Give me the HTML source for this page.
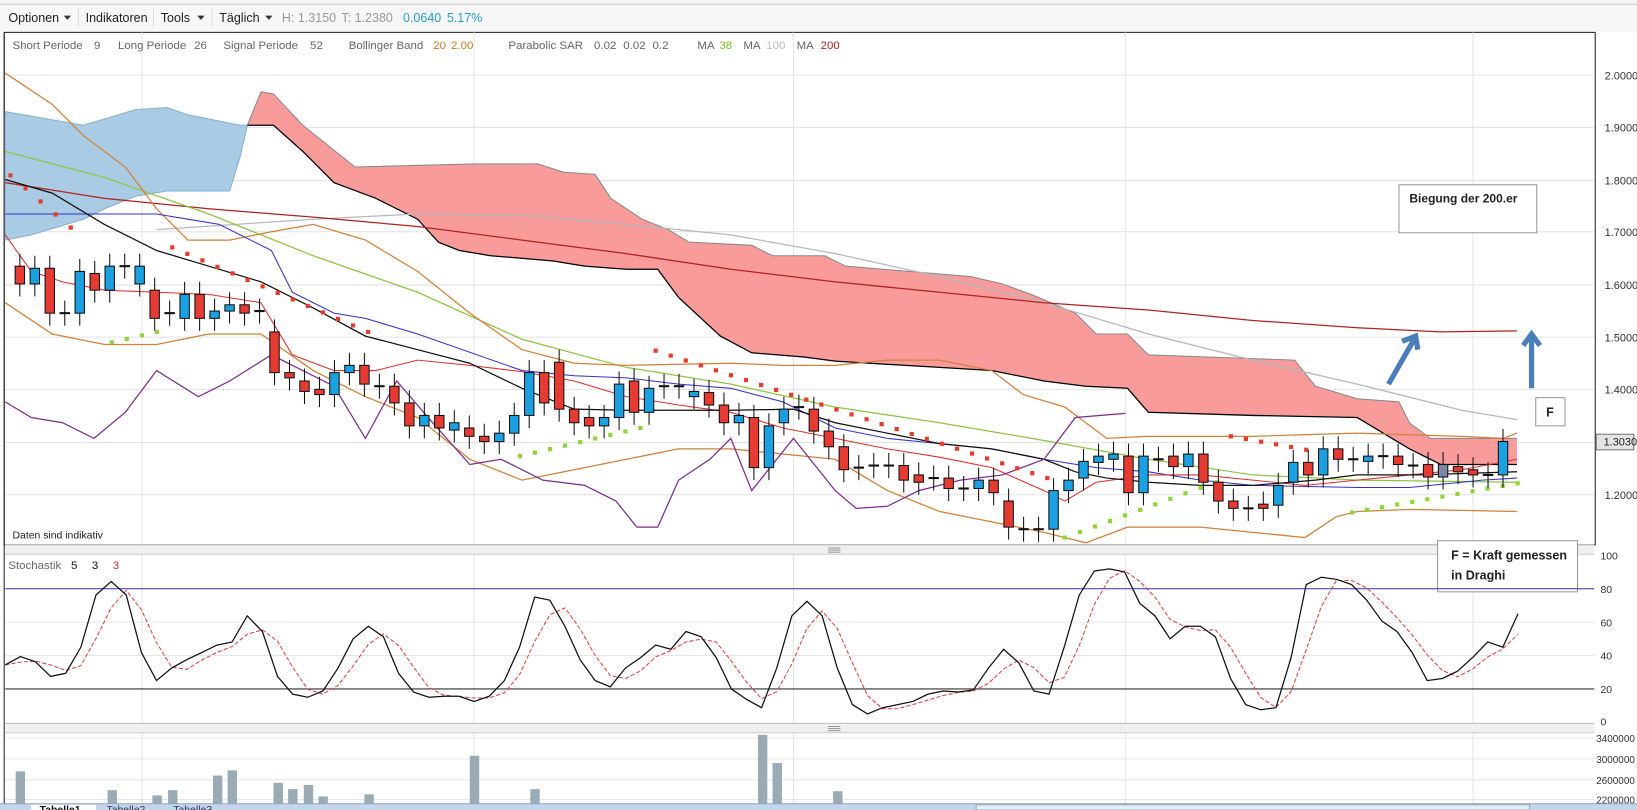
<!DOCTYPE html>
<html><head><meta charset="utf-8">
<style>
html,body{margin:0;padding:0;background:#fff;overflow:hidden}
svg{display:block}
text{font-family:"Liberation Sans",sans-serif}
</style></head>
<body>
<svg id="s" width="1637" height="810" viewBox="0 0 1568 776" preserveAspectRatio="none" xmlns="http://www.w3.org/2000/svg"></svg>
<script>
var o=[];
function P(pts){return pts.map(function(p){return p[0]+','+p[1]}).join(' ')}
function line(pts,c,w,extra){o.push('<polyline points="'+P(pts)+'" fill="none" stroke="'+c+'" stroke-width="'+(w||1)+'" '+(extra||'')+'/>')}
function t(x,y,s,c,sz,a,fw){o.push('<text x="'+x+'" y="'+y+'" fill="'+(c||'#555')+'" font-size="'+(sz||11)+'"'+(a?' text-anchor="'+a+'"':'')+(fw?' font-weight="'+fw+'"':'')+'>'+s+'</text>')}
o.push('<rect x="0" y="0" width="1568" height="776" fill="#fff"/>');
o.push('<rect x="0" y="0" width="1568" height="30" fill="#f7f7f7"/>');
o.push('<line x1="0" y1="4" x2="1568" y2="4" stroke="#ccc"/>');
t(8,21,'Optionen','#222',12);o.push('<path d="M61 15h7l-3.5 4z" fill="#333"/>');
o.push('<line x1="75" y1="8" x2="75" y2="26" stroke="#ddd"/>');
t(82,21,'Indikatoren','#222',12);
o.push('<line x1="147" y1="8" x2="147" y2="26" stroke="#ddd"/>');
t(154,21,'Tools','#222',12);o.push('<path d="M189 15h7l-3.5 4z" fill="#333"/>');
o.push('<line x1="203" y1="8" x2="203" y2="26" stroke="#ddd"/>');
t(210,21,'Täglich','#222',12);o.push('<path d="M254 15h7l-3.5 4z" fill="#333"/>');
t(270,21,'H: 1.3150','#999',12);t(327,21,'T: 1.2380','#999',12);t(386,21,'0.0640','#2aa0c8',12);t(428,21,'5.17%','#2aa0c8',12);
o.push('<rect x="4" y="31" width="1524" height="491" fill="#fff" stroke="#222"/>');
o.push('<line x1="4" y1="31" x2="4" y2="776" stroke="#222"/>');
var gy=[72,122,173,222,273,323,373,424,474],gl=['2.0000','1.9000','1.8000','1.7000','1.6000','1.5000','1.4000','','1.2000'];
gy.forEach(function(y,i){o.push('<line x1="5" y1="'+y+'" x2="1527" y2="'+y+'" stroke="#e2e2e2"/>');if(gl[i])t(1537,y+4,gl[i],'#333',10.5);});
[136,454,760,1078,1411].forEach(function(x){o.push('<line x1="'+x+'" y1="31" x2="'+x+'" y2="770" stroke="#e6e6e6"/>');});
o.push('<rect x="5" y="522" width="1522" height="9" fill="#f0f0f0"/><line x1="5" y1="522" x2="1527" y2="522" stroke="#bbb"/><line x1="5" y1="531" x2="1527" y2="531" stroke="#ccc"/>');
o.push('<rect x="5" y="693" width="1522" height="9" fill="#f0f0f0"/><line x1="5" y1="693" x2="1527" y2="693" stroke="#bbb"/><line x1="5" y1="702" x2="1527" y2="702" stroke="#ccc"/>');
[525,527,529].forEach(function(y){o.push('<line x1="793" y1="'+y+'" x2="805" y2="'+y+'" stroke="#999"/>');o.push('<line x1="793" y1="'+(y+171)+'" x2="805" y2="'+(y+171)+'" stroke="#999"/>');});
var bt=[[5,107],[80,120],[130,105],[160,103],[180,110],[230,120],[237,120]],bb=[[237,120],[230,150],[220,183],[160,183],[130,188],[100,200],[80,210],[30,225],[5,230]];
o.push('<polygon points="'+P(bt.concat(bb))+'" fill="#a9cbe4" stroke="#8ab0cc"/>');
var pt=[[237,120],[250,88],[262,90],[290,120],[315,140],[340,160],[455,157],[515,157],[540,165],[570,167],[585,190],[615,210],[640,220],[660,232],[720,235],[740,245],[790,245],[810,255],[870,260],[930,265],[960,272],[990,283],[1030,300],[1050,320],[1080,320],[1100,340],[1240,345],[1260,370],[1300,382],[1340,385],[1350,405],[1370,420],[1453,420]];
var pb=[[1453,445],[1380,445],[1350,430],[1300,400],[1200,398],[1100,395],[1080,372],[1040,370],[1000,365],[950,355],[900,352],[800,346],[770,342],[720,338],[690,322],[650,285],[630,258],[600,258],[560,255],[530,250],[470,245],[440,240],[420,232],[400,210],[360,190],[320,175],[290,145],[262,120],[237,120]];
o.push('<polygon points="'+P(pt.concat(pb))+'" fill="#f99b9b"/>');
line(pt,'#888',1);line(pb,'#000',1.2);
line([[150,220],[300,210],[400,205],[500,206],[600,215],[700,225],[800,243],[900,265],[1000,290],[1100,320],[1200,345],[1300,368],[1400,393],[1453,402]],'#b8b8b8',1.2);
line([[5,175],[100,190],[200,200],[300,208],[400,217],[500,230],[600,243],[700,258],[800,270],[900,280],[1000,290],[1100,297],[1200,307],[1300,314],[1380,318],[1453,317]],'#b22222',1.2);
line([[5,145],[100,170],[200,205],[300,245],[400,280],[500,325],[600,352],[700,368],[800,390],[900,405],[1000,422],[1100,440],[1200,455],[1300,460],[1453,462]],'#8dc63f',1.2);
line([[5,70],[50,100],[80,130],[120,160],[150,200],[180,230],[220,230],[260,222],[300,215],[350,230],[400,260],[450,300],[500,335],[550,348],[600,350],[700,348],[750,350],[800,350],[850,345],[900,345],[950,355],[980,378],[1020,390],[1060,420],[1100,418],[1200,418],[1300,415],[1400,418],[1440,420],[1453,415]],'#d2813a',1.2);
line([[5,290],[50,320],[100,330],[150,330],[200,320],[250,320],[300,355],[350,380],[400,400],[450,440],[500,460],[550,450],[600,440],[650,430],[700,430],[750,435],[800,440],[850,470],[900,490],[950,500],[1000,510],[1040,520],[1080,505],[1150,505],[1200,510],[1250,515],[1280,495],[1300,490],[1350,488],[1453,490]],'#d2813a',1.2);
line([[5,205],[150,205],[180,210],[210,215],[260,240],[280,280],[320,300],[350,305],[400,320],[500,355],[550,360],[600,362],[650,368],[700,372],[750,385],[800,410],[850,420],[900,425],[950,430],[1000,440],[1050,448],[1100,452],[1150,460],[1200,465],[1300,467],[1350,467],[1420,460],[1453,458]],'#3333cc',1);
line([[5,225],[30,260],[60,270],[100,278],[150,280],[200,282],[250,290],[280,340],[320,355],[360,355],[400,345],[450,350],[500,356],[550,365],[600,380],[650,388],[700,395],[750,410],[800,420],[850,430],[900,438],[950,448],[1000,470],[1020,480],[1050,462],[1100,455],[1150,455],[1200,460],[1250,465],[1300,460],[1350,455],[1400,450],[1453,440]],'#e03030',1);
line([[5,172],[50,185],[100,215],[150,240],[200,255],[250,270],[300,295],[350,322],[400,335],[450,348],[500,372],[550,392],[600,393],[700,393],[760,392],[800,405],[850,415],[900,425],[950,430],[1000,440],[1030,452],[1060,458],[1100,462],[1150,465],[1200,465],[1260,460],[1300,455],[1360,455],[1453,452]],'#111',1.2);
line([[5,385],[30,400],[60,405],[90,420],[120,395],[150,355],[190,380],[220,365],[260,340],[290,355],[320,370],[350,420],[380,365],[410,400],[450,445],[480,440],[520,460],[560,465],[590,480],[610,505],[630,505],[650,460],[680,440],[700,420],[720,470],[760,420],[800,470],[820,487],[850,485],[880,470],[920,460],[960,455],[1000,440],[1030,400],[1078,396]],'#7b2d8e',1.2);
function dots(arr,c){arr.forEach(function(p){o.push('<rect x="'+(p[0]-2)+'" y="'+(p[1]-2)+'" width="4" height="4" fill="'+c+'"/>');});}
function ramp(x0,x1,y0,y1){var a=[];var n=Math.round((x1-x0)/14.43);for(var i=0;i<=n;i++)a.push([x0+i*14.43,y0+(y1-y0)*i/Math.max(n,1)]);return a;}
dots(ramp(10,66,168,218),'#e83a2a');
dots(ramp(107,150,328,318),'#8dd63a');
dots(ramp(165,353,237,318),'#e83a2a');
dots(ramp(498,614,437,410),'#8dd63a');
dots(ramp(628,1005,336,458),'#e83a2a');
dots(ramp(1020,1165,515,462),'#8dd63a');
dots(ramp(1179,1281,418,436),'#e83a2a');
dots(ramp(1295,1454,491,463),'#8dd63a');
var C=[[255,272,0],[257,272,1],[257,300,0],[300,300,2],[260,300,1],[262,278,0],[255,278,1],[255,255,2],[255,272,1],[278,305,0],[300,300,2],[282,305,1],[282,305,0],[298,305,1],[292,298,1],[292,300,0],[298,298,2],[318,357,0],[357,362,0],[365,375,0],[373,378,0],[357,378,1],[350,357,1],[350,368,0],[370,370,2],[370,386,0],[386,408,0],[398,408,1],[398,410,0],[405,412,1],[410,418,0],[418,423,0],[415,423,1],[398,415,1],[357,398,1],[357,386,0],[347,392,0],[392,405,0],[400,408,0],[400,408,1],[368,400,1],[365,395,0],[372,395,1],[370,370,2],[370,370,2],[375,380,1],[376,388,0],[388,405,0],[398,405,1],[400,448,0],[408,448,1],[392,405,1],[390,390,2],[392,413,0],[413,428,0],[428,450,0],[448,448,2],[446,446,2],[446,446,2],[446,460,0],[455,462,0],[458,458,2],[458,468,0],[468,468,2],[460,468,1],[460,472,0],[480,505,0],[507,507,2],[507,507,2],[470,507,1],[460,470,1],[442,458,1],[437,443,1],[435,440,1],[437,472,0],[437,472,1],[440,440,2],[437,447,0],[435,447,1],[435,462,0],[462,480,0],[480,487,0],[487,487,2],[483,487,0],[465,484,1],[443,462,1],[443,455,0],[430,455,1],[430,440,0],[440,440,2],[437,442,1],[437,437,2],[437,445,0],[446,446,2],[445,457,0],[445,457,3],[447,452,0],[450,455,0],[455,455,2],[423,455,1]];
C.forEach(function(c,i){var x=19+i*14.35;var a=Math.min(c[0],c[1]),b=Math.max(c[0],c[1]);
 o.push('<line x1="'+x+'" y1="'+(a-12)+'" x2="'+x+'" y2="'+(b+12)+'" stroke="#111"/>');
 if(c[2]==2){o.push('<line x1="'+(x-5)+'" y1="'+a+'" x2="'+(x+5)+'" y2="'+a+'" stroke="#111" stroke-width="2"/>');}
 else{var f=c[2]==0?'#e53b32':(c[2]==1?'#1ba1e2':'#7a85a8');if(b-a<3)b=a+3;o.push('<rect x="'+(x-4.5)+'" y="'+a+'" width="9" height="'+(b-a)+'" fill="'+f+'" stroke="#111"/>');}
});
o.push('<rect x="1529" y="416" width="36" height="15" fill="#e4e4e4" stroke="#777"/>');t(1536,427,'1.3030','#222',10.5);
t(12,47,'Short Periode','#666',11);t(90,47,'9','#666',11);t(113,47,'Long Periode','#666',11);t(186,47,'26','#666',11);
t(214,47,'Signal Periode','#666',11);t(297,47,'52','#666',11);
t(334,47,'Bollinger Band','#666',11);t(415,47,'20','#c87a2a',11);t(432,47,'2.00','#c87a2a',11);
t(487,47,'Parabolic SAR','#666',11);t(569,47,'0.02','#666',11);t(597,47,'0.02','#666',11);t(625,47,'0.2','#666',11);
t(668,47,'MA','#666',11);t(689,47,'38','#7cbf2a',11);t(712,47,'MA','#666',11);t(734,47,'100','#bbb',11);t(763,47,'MA','#666',11);t(786,47,'200','#b22222',11);
t(12,516,'Daten sind indikativ','#222',10);
o.push('<rect x="1340" y="177" width="132" height="46" fill="#fff" stroke="#999"/>');t(1350,194,'Biegung der 200.er','#222',11.5,null,'bold');
o.push('<rect x="1471" y="381" width="28" height="27" fill="#fff" stroke="#999"/>');t(1481,399,'F','#222',12,null,'bold');
o.push('<rect x="1377" y="518" width="134" height="49" fill="#fff" stroke="#999"/>');t(1390,536,'F = Kraft gemessen','#222',12,null,'bold');t(1390,555,'in Draghi','#222',12,null,'bold');
o.push('<g stroke="#4a7ebb" stroke-width="5" fill="none" stroke-linecap="butt"><line x1="1330" y1="368" x2="1354" y2="326"/><polyline points="1343,327 1356,322 1358,335"/><line x1="1467" y1="372" x2="1467" y2="322"/><polyline points="1459,331 1467,320 1475,331"/></g>');
t(8,545,'Stochastik','#666',11);t(68,545,'5','#111',11);t(88,545,'3','#111',11);t(108,545,'3','#c33',11);
[[532,'100'],[564,'80'],[596,'60'],[628,'40'],[660,'20'],[691,'0']].forEach(function(a){if(a[0]==596||a[0]==628)o.push('<line x1="5" y1="'+a[0]+'" x2="1527" y2="'+a[0]+'" stroke="#e6e6e6"/>');t(1533,a[0]+4,a[1],'#333',10);});
o.push('<line x1="5" y1="564" x2="1527" y2="564" stroke="#3030a0"/><line x1="5" y1="660" x2="1527" y2="660" stroke="#333"/>');
var ys=[637,629,634,648,645,620,570,557,570,625,652,640,632,625,618,615,590,605,648,665,668,662,640,612,600,610,645,663,668,667,667,672,667,652,620,572,575,600,632,652,658,640,630,618,622,605,610,630,660,670,678,640,590,576,590,640,675,684,678,675,672,665,662,663,661,640,622,635,662,665,620,570,547,545,548,578,590,612,600,600,610,650,675,680,678,630,560,553,555,560,575,595,605,625,652,650,643,630,615,620,588];
var bl=[],rd=[];ys.forEach(function(y,i){var x=5+i*14.49;bl.push([x,y]);var a=ys[Math.max(0,i-2)],b=ys[Math.max(0,i-1)];rd.push([x,(a+b+y)/3]);});
line(rd,'#e04040',1,'stroke-dasharray="4,2"');line(bl,'#111',1.2);
[[707,'3400000'],[727,'3000000'],[747,'2600000'],[766,'2200000']].forEach(function(a){o.push('<line x1="5" y1="'+a[0]+'" x2="1527" y2="'+a[0]+'" stroke="#e6e6e6"/>');t(1529,a[0]+4,a[1],'#333',9.5);});
[[19,739],[107,757],[150,762],[165,757],[208,743],[222,738],[266,750],[280,756],[295,752],[309,763],[353,761],[454,724],[512,756],[730,704],[744,731],[802,758]].forEach(function(b){o.push('<rect x="'+(b[0]-4)+'" y="'+b[1]+'" width="9" height="'+(771-b[1])+'" fill="#9aabb5"/>');});
o.push('<rect x="0" y="770" width="1568" height="6" fill="#c5d6ea"/><line x1="0" y1="770" x2="1568" y2="770" stroke="#8aa4c8"/>');
o.push('<rect x="30" y="771" width="62" height="5" fill="#fff"/>');
t(38,779,'Tabelle1','#111',10,null,'bold');t(102,779,'Tabelle2','#335',10);t(166,779,'Tabelle3','#335',10);
o.push('<rect x="935" y="771" width="530" height="5" fill="#e8eef6" stroke="#9ab"/>');
document.getElementById('s').innerHTML=o.join('');
</script>
</body></html>
